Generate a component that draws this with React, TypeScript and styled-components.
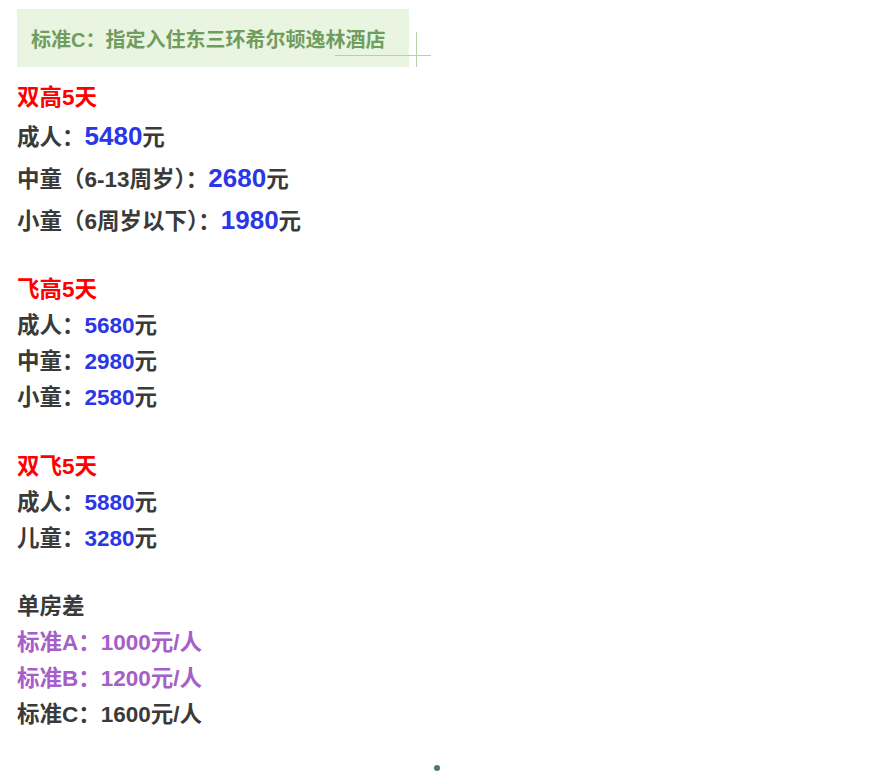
import React from "react";
import styled, { createGlobalStyle } from "styled-components";

const Global = createGlobalStyle`
  body { margin: 0; background: #fff; font-family: "Liberation Sans", Arial, "Noto Sans CJK SC", sans-serif; }
`;

const Page = styled.div`
  position: relative;
  width: 880px;
  height: 772px;
  padding: 9px 0 0 17px;
  box-sizing: border-box;
  color: #3a3a3a;
  font-weight: bold;
`;

const Header = styled.div`
  position: relative;
  width: 392px;
  height: 58px;
  background: #eaf5e1;
  color: #6f9d5f;
  font-size: 20px;
  display: flex;
  align-items: center;
  padding-left: 14px;
  box-sizing: border-box;
  margin-bottom: 13px;
  white-space: nowrap;
`;

const HLine = styled.div`
  position: absolute;
  left: 318px;
  top: 46px;
  width: 96px;
  height: 1px;
  background: #b5d3a8;
`;
const VLine = styled.div`
  position: absolute;
  left: 399px;
  top: 23px;
  width: 1px;
  height: 35px;
  background: #b5d3a8;
`;

const Group = styled.div<{ $gap?: number }>`
  margin-top: ${(p) => p.$gap ?? 0}px;
`;

const Title = styled.div<{ $color?: string }>`
  font-size: 22.5px;
  line-height: 36px;
  color: ${(p) => p.$color ?? "#3a3a3a"};
`;

const Line = styled.div<{ $big?: boolean; $color?: string }>`
  font-size: 22.5px;
  line-height: ${(p) => (p.$big ? 40 : 36)}px;
  color: ${(p) => p.$color ?? "#3a3a3a"};
  white-space: nowrap;
`;

const Num = styled.span<{ $big?: boolean }>`
  color: #2b36e6;
  font-size: ${(p) => (p.$big ? 26 : 22.5)}px;
`;

const Dot = styled.div`
  position: absolute;
  left: 434px;
  top: 765px;
  width: 6px;
  height: 6px;
  border-radius: 50%;
  background: #4d7b6b;
`;

export default function App() {
  return (
    <>
      <Global />
      <Page>
        <Header>
          标准C：指定入住东三环希尔顿逸林酒店
          <HLine />
          <VLine />
        </Header>
        <Group>
          <Title $color="#ff0000">双高5天</Title>
          <Line $big>成人：<Num $big>5480</Num>元</Line>
          <Line $big>中童（6-13周岁）：<Num $big>2680</Num>元</Line>
          <Line $big>小童（6周岁以下）：<Num $big>1980</Num>元</Line>
        </Group>
        <Group $gap={30}>
          <Title $color="#ff0000">飞高5天</Title>
          <Line>成人：<Num>5680</Num>元</Line>
          <Line>中童：<Num>2980</Num>元</Line>
          <Line>小童：<Num>2580</Num>元</Line>
        </Group>
        <Group $gap={33}>
          <Title $color="#ff0000">双飞5天</Title>
          <Line>成人：<Num>5880</Num>元</Line>
          <Line>儿童：<Num>3280</Num>元</Line>
        </Group>
        <Group $gap={32}>
          <Title>单房差</Title>
          <Line $color="#a65ec9">标准A：1000元/人</Line>
          <Line $color="#a65ec9">标准B：1200元/人</Line>
          <Line>标准C：1600元/人</Line>
        </Group>
        <Dot />
      </Page>
    </>
  );
}
